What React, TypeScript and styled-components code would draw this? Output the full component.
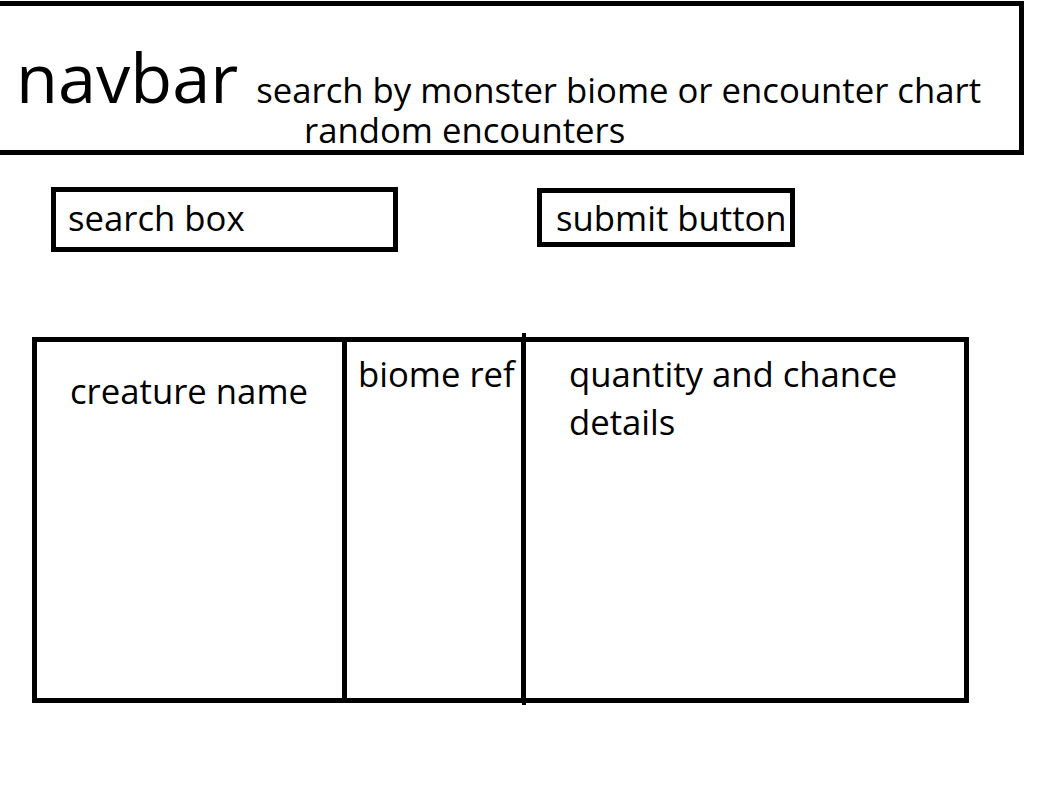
import styled, { createGlobalStyle } from "styled-components";

const GlobalStyle = createGlobalStyle`
    html, body {
        margin: 0;
        padding: 0;
        background: #ffffff;
        overflow: hidden;
    }
    body {
        font-family: "Open Sans", "Noto Sans", sans-serif;
        color: #000000;
    }
`;

const Page = styled.div`
    width: 1041px;
    height: 798px;
    display: flex;
    flex-direction: column;
`;

const Navbar = styled.header`
    box-sizing: border-box;
    width: 1030px;
    height: 154px;
    margin: 1px 0 0 -6px;
    border: 5px solid #000;
    padding: 37px 0 0 17px;
`;

const NavRow = styled.div`
    display: flex;
    align-items: baseline;
    gap: 18px;
`;

const Brand = styled.span`
    font-size: 68.5px;
    line-height: 67px;
`;

const NavText = styled.span<{ $indent?: number }>`
    display: block;
    font-size: 34.7px;
    line-height: 40px;
    white-space: nowrap;
    padding-left: ${(p) => p.$indent ?? 0}px;
`;

const SearchRow = styled.div`
    display: flex;
    align-items: flex-start;
    gap: 139px;
    margin: 32px 0 0 51px;
`;

const SearchBox = styled.div`
    box-sizing: border-box;
    width: 347px;
    height: 65px;
    border: 5px solid #000;
    padding: 4px 0 0 12px;
    font-size: 34.7px;
    line-height: 44px;
`;

const SubmitButton = styled.div`
    box-sizing: border-box;
    width: 258px;
    height: 59px;
    margin-top: 1px;
    border: 5px solid #000;
    padding: 3px 0 0 14px;
    font-size: 34.7px;
    line-height: 44px;
    white-space: nowrap;
`;

const Table = styled.div`
    box-sizing: border-box;
    width: 937px;
    height: 366px;
    margin: 85px 0 0 32px;
    border: 5px solid #000;
    display: grid;
    grid-template-columns: 310px 179px 1fr;
`;

const Cell = styled.div<{ $top: number; $left: number; $divider?: boolean; $overshoot?: boolean }>`
    position: relative;
    padding: ${(p) => p.$top}px 0 0 ${(p) => p.$left}px;
    border-right: ${(p) => (p.$divider ? "5px solid #000" : "none")};
    font-size: 34.7px;
    line-height: 48px;
    white-space: nowrap;

    &::after {
        content: "";
        display: ${(p) => (p.$overshoot ? "block" : "none")};
        position: absolute;
        right: -5px;
        top: -9px;
        bottom: -7px;
        width: 4px;
        background: #000;
    }
`;

export default function App() {
    return (
        <Page>
            <GlobalStyle />
            <Navbar>
                <NavRow>
                    <Brand>navbar</Brand>
                    <NavText>search by monster biome or encounter chart</NavText>
                </NavRow>
                <NavText $indent={288}>random encounters</NavText>
            </Navbar>
            <SearchRow>
                <SearchBox>search box</SearchBox>
                <SubmitButton>submit button</SubmitButton>
            </SearchRow>
            <Table>
                <Cell $top={25} $left={33} $divider>
                    creature name
                </Cell>
                <Cell $top={8} $left={11} $divider $overshoot>
                    biome ref
                </Cell>
                <Cell $top={8} $left={43}>
                    quantity and chance
                    <br />
                    details
                </Cell>
            </Table>
        </Page>
    );
}
